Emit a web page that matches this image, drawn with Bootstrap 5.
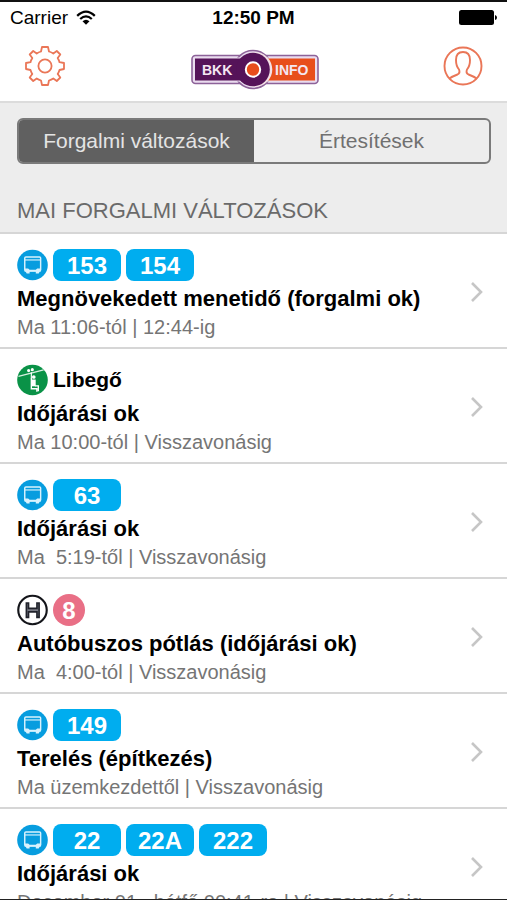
<!DOCTYPE html>
<html lang="hu">
<head>
<meta charset="utf-8">
<meta name="viewport" content="width=device-width, initial-scale=1">
<title>BKK Info</title>
<link href="https://cdn.jsdelivr.net/npm/bootstrap@5.3.0/dist/css/bootstrap.min.css" rel="stylesheet">
<style>
body { font-family: "Liberation Sans", Arial, sans-serif; background: #fff; color: #000; }
.app { border-top: 2px solid #111; border-bottom: 1px solid #222; }
.status { font-size: 19px; line-height: 32px; padding: 0 10px; }
.topbar { height: 69px; padding: 0 24px 3px; border-bottom: 2px solid #dcdcdc; }
.bar-btn { border: 0; background: none; padding: 0; line-height: 0; }
.panel { background: #ededed; padding: 15px 16px 0 17px; }
.segments { border: 2px solid #7a7a7a; border-radius: 6px; height: 46px; overflow: hidden; }
.segments button { border: 0; background: none; color: #707070; font-size: 21px; line-height: 42px; padding: 0; flex: 1 1 0; }
.segments button.chosen { background: #606060; color: #e4e4e4; }
.section-title { font-size: 22px; line-height: 32px; font-weight: 400; color: #6a6a6a; margin: 0; padding: 31px 0 5px; }
.feed { overflow-y: auto; scrollbar-width: none; border-top: 2px solid #d6d6d6; }
.feed::-webkit-scrollbar { display: none; }
.notice { color: #000; height: 115px; padding: 15px 23px 13px 17px; border-bottom: 2px solid #d6d6d6; }
.lines { gap: 5px; height: 32px; }
.lines svg { width: 31px; height: 32px; }
.route { background: #00adef; color: #fff; width: 68px; height: 32px; border-radius: 8px; font-size: 24px; line-height: 33px; font-weight: 700; text-align: center; }
.route-rail { background: #e96f86; width: 32px; border-radius: 16px; }
.notice h2, .place { font-size: 22px; font-weight: 700; margin: 0; }
.place { font-size: 21px; }
.notice h2 { line-height: 32px; padding-top: 2px; }
.notice p { font-size: 20px; line-height: 24px; color: #757575; margin: 0; white-space: pre; }
</style>
<script src="https://cdn.jsdelivr.net/npm/bootstrap@5.3.0/dist/js/bootstrap.bundle.min.js"></script>
</head>
<body>
<svg class="d-none" aria-hidden="true">
  <symbol id="bus" viewBox="0 0 32 32">
    <circle cx="16" cy="16" r="15.8" fill="#079ddf"/>
    <rect x="8" y="7.700" width="16.400" height="14.300" rx="1.200" fill="none" stroke="#d9f2fd" stroke-width="1.500"/>
    <path d="M8 10.800H24.400" stroke="#d9f2fd" stroke-width="1.200"/>
    <path d="M8 19.500H11.500L13 21H19.400L20.900 19.500H24.400V23H8zM9 23h4v1.800h-3zM19.400 23h4l-1 1.800h-3z" fill="#d9f2fd"/>
  </symbol>
  <symbol id="chair" viewBox="0 0 32 32">
    <circle cx="16" cy="16" r="15.800" fill="#0a9247"/>
    <path d="M1.500 12.200L27.500 5.500" stroke="#d8efe0" stroke-width="1.200"/>
    <path d="M14.800 8v7" stroke="#fff" stroke-width="1.200"/>
    <circle cx="12" cy="6.300" r="1.600" fill="#fff"/><circle cx="15.800" cy="5.300" r="1.600" fill="#fff"/>
    <circle cx="17.300" cy="12.900" r="1.900" fill="#fff"/>
    <path d="M14.800 14.500V25H20.500V28M18.500 22H22V27.500" fill="none" stroke="#fff" stroke-width="1.400"/>
    <path d="M15.500 15.500h3.800v7h-3.800z" fill="#fff"/>
  </symbol>
  <symbol id="hev" viewBox="0 0 32 32">
    <circle cx="16" cy="16" r="14.700" fill="#fff" stroke="#14151a" stroke-width="2.200"/>
    <path d="M9.700 8.800H11.900V14.300H20.600V8.800H22.800V23.600H20.600V18H11.900V23.600H9.700z" fill="#777983" stroke="#20222b" stroke-width="1.700"/>
  </symbol>
  <symbol id="next" viewBox="0 0 14 22">
    <path d="M2 2L11 11L2 20" fill="none" stroke="#c6c6c6" stroke-width="2.600"/>
  </symbol>
</svg>

<div class="app vh-100 d-flex flex-column">
  <header>
    <div class="status d-flex align-items-center">
      <div class="col d-flex align-items-center gap-2"><span>Carrier</span>
        <svg width="20" height="16" viewBox="0 0 20 16" aria-hidden="true"><path d="M1.200 5.800Q10-2.600 18.800 5.800M4.200 9Q10 3.800 15.800 9" fill="none" stroke="#000" stroke-width="2.300"/><path d="M6.500 11.300Q10 8 13.500 11.300L10 14.800z"/></svg>
      </div>
      <div class="fw-bold">12:50 PM</div>
      <div class="col d-flex justify-content-end">
        <svg width="38" height="16" viewBox="0 0 38 16" role="img" aria-label="Battery"><rect width="35" height="15" rx="2.500"/><path d="M36 5q2 .5 2 2.500t-2 2.500z"/></svg>
      </div>
    </div>
    <nav class="topbar d-flex align-items-center justify-content-between">
      <button class="bar-btn" type="button" aria-label="Beállítások">
        <svg width="42" height="42" viewBox="-21 -21 42 42" fill="none" stroke="#ea7657" stroke-width="1.800" stroke-linejoin="round"><circle r="6.600"/><path d="M-3 -19H3L4 -14.500Q6.500 -13.800 8.300 -12.500L11.800 -15L15.300 -11.500L12.700 -8Q14 -5.800 14.500 -3.800L19 -3V3L14.500 4Q13.800 6.300 12.700 8L15.300 11.500L11.800 15L8.300 12.500Q6.300 13.800 4 14.500L3 19H-3L-4 14.500Q-6.300 13.800 -8.300 12.500L-11.800 15L-15.300 11.500L-12.700 8Q-13.800 6.300 -14.500 4L-19 3V-3L-14.500 -3.800Q-14 -5.800 -12.700 -8L-15.300 -11.500L-11.800 -15L-8.300 -12.500Q-6.500 -13.800 -4 -14.500z"/></svg>
      </button>
      <svg class="mt-2" width="128" height="42" viewBox="0 0 128 42" role="img" aria-label="BKK Info" font-family="Liberation Sans" font-weight="700" font-size="14" fill="#f4e6f2">
        <rect x="1" y="6.500" width="126" height="28" rx="3.500" fill="#eadcef" stroke="#8d6299" stroke-width="1.600"/>
        <circle cx="62" cy="20.500" r="19" fill="#eadcef" stroke="#8d6299" stroke-width="1.600"/>
        <path d="M3 8.500H63V32.500H3z" fill="#eadcef"/>
        <path d="M63 8.500H125V32.500H63z" fill="#eadcef"/>
        <path d="M4 9.500H63V31.500H4z" fill="#551359"/>
        <path d="M63 9.500H124V31.500H63z" fill="#e84e1b"/>
        <circle cx="64" cy="20.500" r="17.300" fill="#f3dfe5"/>
        <circle cx="62" cy="20.500" r="16.800" fill="#551359"/>
        <circle cx="62" cy="20.500" r="7.200" fill="#e84e1b" stroke="#fff" stroke-width="2"/>
        <text x="11" y="25.500">BKK</text><text x="84" y="25.500">INFO</text>
      </svg>
      <button class="bar-btn" type="button" aria-label="Profil">
        <svg width="40" height="40" viewBox="0 0 40 40" fill="none" stroke="#ea7657" stroke-width="1.900"><circle cx="20" cy="20" r="18.500"/><path d="M6.500 32.500Q9 30.500 14.500 28.500Q17.500 27 16 23.500Q13 20 13 14Q13 6 20 6T27 14Q27 20 24 23.500Q22.500 27 25.500 28.500Q31 30.500 33.500 32.500"/></svg>
      </button>
    </nav>
  </header>
  <section class="panel">
    <div class="segments d-flex" role="group">
      <button class="chosen" type="button" aria-pressed="true">Forgalmi változások</button>
      <button type="button" aria-pressed="false">Értesítések</button>
    </div>
    <h1 class="section-title">MAI FORGALMI VÁLTOZÁSOK</h1>
  </section>
  <main class="feed flex-grow-1">
    <a href="#" class="notice d-flex text-decoration-none">
      <div class="flex-grow-1">
        <div class="lines d-flex"><svg role="img" aria-label="Busz"><use href="#bus"/></svg><span class="route">153</span><span class="route">154</span></div>
        <h2>Megnövekedett menetidő (forgalmi ok)</h2>
        <p>Ma 11:06-tól | 12:44-ig</p>
      </div>
      <svg class="align-self-center" width="14" height="22" aria-hidden="true"><use href="#next"/></svg>
    </a>
    <a href="#" class="notice d-flex text-decoration-none">
      <div class="flex-grow-1">
        <div class="lines d-flex align-items-center"><svg role="img" aria-label="Libegő"><use href="#chair"/></svg><span class="place">Libegő</span></div>
        <h2>Időjárási ok</h2>
        <p>Ma 10:00-tól | Visszavonásig</p>
      </div>
      <svg class="align-self-center" width="14" height="22" aria-hidden="true"><use href="#next"/></svg>
    </a>
    <a href="#" class="notice d-flex text-decoration-none">
      <div class="flex-grow-1">
        <div class="lines d-flex"><svg role="img" aria-label="Busz"><use href="#bus"/></svg><span class="route">63</span></div>
        <h2>Időjárási ok</h2>
        <p>Ma  5:19-től | Visszavonásig</p>
      </div>
      <svg class="align-self-center" width="14" height="22" aria-hidden="true"><use href="#next"/></svg>
    </a>
    <a href="#" class="notice d-flex text-decoration-none">
      <div class="flex-grow-1">
        <div class="lines d-flex"><svg role="img" aria-label="HÉV"><use href="#hev"/></svg><span class="route route-rail">8</span></div>
        <h2>Autóbuszos pótlás (időjárási ok)</h2>
        <p>Ma  4:00-tól | Visszavonásig</p>
      </div>
      <svg class="align-self-center" width="14" height="22" aria-hidden="true"><use href="#next"/></svg>
    </a>
    <a href="#" class="notice d-flex text-decoration-none">
      <div class="flex-grow-1">
        <div class="lines d-flex"><svg role="img" aria-label="Busz"><use href="#bus"/></svg><span class="route">149</span></div>
        <h2>Terelés (építkezés)</h2>
        <p>Ma üzemkezdettől | Visszavonásig</p>
      </div>
      <svg class="align-self-center" width="14" height="22" aria-hidden="true"><use href="#next"/></svg>
    </a>
    <a href="#" class="notice d-flex text-decoration-none">
      <div class="flex-grow-1">
        <div class="lines d-flex"><svg role="img" aria-label="Busz"><use href="#bus"/></svg><span class="route">22</span><span class="route">22A</span><span class="route">222</span></div>
        <h2>Időjárási ok</h2>
        <p>December 01., hétfő 00:41-re | Visszavonásig</p>
      </div>
      <svg class="align-self-center" width="14" height="22" aria-hidden="true"><use href="#next"/></svg>
    </a>
  </main>
</div>
</body>
</html>
